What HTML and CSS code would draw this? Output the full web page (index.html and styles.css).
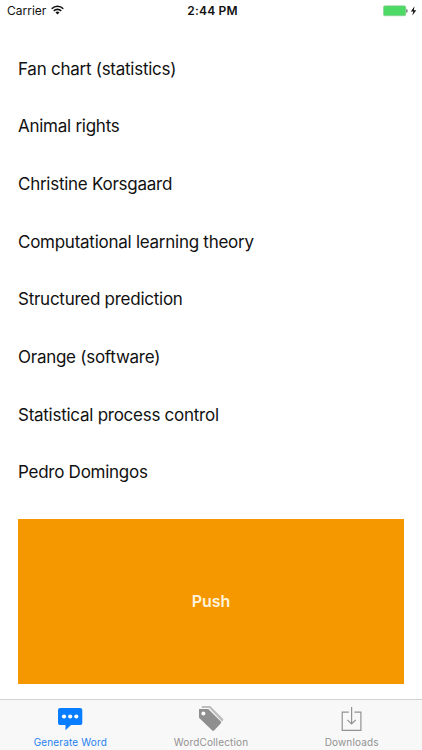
FILE: index.html
```html
<!DOCTYPE html>
<html lang="en">
<head>
<meta charset="utf-8">
<title>Generate Word</title>
<link rel="stylesheet" href="styles.css">
</head>
<body>
<div class="screen">
  <header class="status">
    <div class="carrier">
      <span>Carrier</span>
      <svg class="wifi" width="13" height="10" viewBox="0 0 13 10" fill="none" stroke="#111" stroke-width="1.6">
        <path d="M.7 3.7a8.2 8.2 0 0 1 11.6 0M2.8 5.9a5.2 5.2 0 0 1 7.4 0"/>
        <path d="M6.5 9.5 4.5 7.5a2.8 2.8 0 0 1 4 0z" fill="#111" stroke="none"/>
      </svg>
    </div>
    <time class="clock">2:44 PM</time>
    <div class="power">
      <svg width="34" height="12" viewBox="0 0 34 12">
        <rect x=".4" y=".8" width="22.4" height="10" rx="1.6" fill="#4cd964" stroke="#8fc99a" stroke-width=".6"/>
        <path d="M23.500 4v3.800c1.300-.3 1.300-3.500 0-3.800z" fill="#333"/>
        <path d="M31.500 1.300 27.900 6.400h2.400l-1 4.200 4-5.400h-2.500z" fill="#111"/>
      </svg>
    </div>
  </header>
  <ul class="words">
    <li>Fan chart (statistics)</li>
    <li>Animal rights</li>
    <li>Christine Korsgaard</li>
    <li>Computational learning theory</li>
    <li>Structured prediction</li>
    <li>Orange (software)</li>
    <li>Statistical process control</li>
    <li>Pedro Domingos</li>
  </ul>
  <button class="push">Push</button>
  <nav class="tabs">
    <a class="tab active">
      <svg width="28" height="28" viewBox="0 0 28 28">
        <path d="M4.300 4h19.700c1.400 0 2.300.9 2.300 2.300v12.400c0 1.400-.9 2.300-2.300 2.300h-9L9.500 26.200V21H4.300C2.900 21 2 20.100 2 18.700V6.300C2 4.900 2.900 4 4.300 4z" fill="#087dff"/>
        <g fill="#fff"><circle cx="8" cy="12.500" r="2.100"/><circle cx="14.200" cy="12.500" r="2.100"/><circle cx="20.300" cy="12.500" r="2.100"/></g>
      </svg>
      <span>Generate Word</span>
    </a>
    <a class="tab">
      <svg width="28" height="28" viewBox="0 0 28 28">
        <path d="M4.800 2h8.400L25.800 14.500c.7.800.7 1.500 0 2.200l-.8.800L12.200 4H4.800z" fill="#bdbdbd"/>
        <path d="M2 5h9.200l12.400 12.300c.8.800.8 1.500 0 2.300l-6.200 6.600c-.8.800-1.600.8-2.400 0L2 13.700z" fill="#8f8f8f"/>
        <circle cx="6.400" cy="9.500" r="2" fill="#fff"/>
      </svg>
      <span>WordCollection</span>
    </a>
    <a class="tab">
      <svg width="28" height="28" viewBox="0 0 28 28" fill="none" stroke="#929292" stroke-width="1.200">
        <path d="M10.800 8.200H4.200v18.200h18.700V8.200h-6.500M13.600 3v16.800M9.400 15.800l4.200 4.200 4.200-4.200"/>
      </svg>
      <span>Downloads</span>
    </a>
  </nav>
</div>
</body>
</html>
```
FILE: styles.css
```css
* { box-sizing: border-box; }
body {
  margin: 0;
  background: #fff;
  color: #111;
  font-family: Inter, "Liberation Sans", sans-serif;
}
.screen {
  width: 422px;
  height: 750px;
  display: flex;
  flex-direction: column;
  overflow: hidden;
}
.status {
  height: 22px;
  flex: none;
  padding: 0 5px 0 7px;
  display: grid;
  grid-template-columns: 1fr auto 1fr;
  align-items: center;
  font-size: 12px;
  line-height: 22px;
}
.carrier { display: flex; align-items: center; gap: 5px; letter-spacing: 0; }
.wifi { margin-top: -2px; }
.clock { font-weight: 600; letter-spacing: .2px; padding-left: 1px; }
.power { display: flex; justify-content: flex-end; }
.words {
  list-style: none;
  margin: 18px 0 0;
  padding: 0 18px;
  height: 461px;
  flex: none;
  display: grid;
  grid-template-rows: repeat(8, 1fr);
  align-items: center;
  font-size: 17px;
  letter-spacing: -.26px;
}
.push {
  flex: none;
  height: 165px;
  margin: 18px 18px 0;
  border: 0;
  padding: 0 0 2px;
  background: #f59800;
  color: #fff3dc;
  font: 600 16px Inter, sans-serif;
  letter-spacing: 0;
}
.tabs {
  margin-top: auto;
  height: 51px;
  flex: none;
  display: grid;
  grid-template-columns: repeat(3, 1fr);
  background: #f8f8f8;
  border-top: 1px solid #d2d2d2;
}
.tab {
  display: flex;
  flex-direction: column;
  align-items: center;
  padding-top: 4px;
  color: #929292;
  font-size: 10px;
  line-height: 13px;
  letter-spacing: .15px;
}
.tab span { margin-top: 4px; }
.active { color: #2581f0; }
```
